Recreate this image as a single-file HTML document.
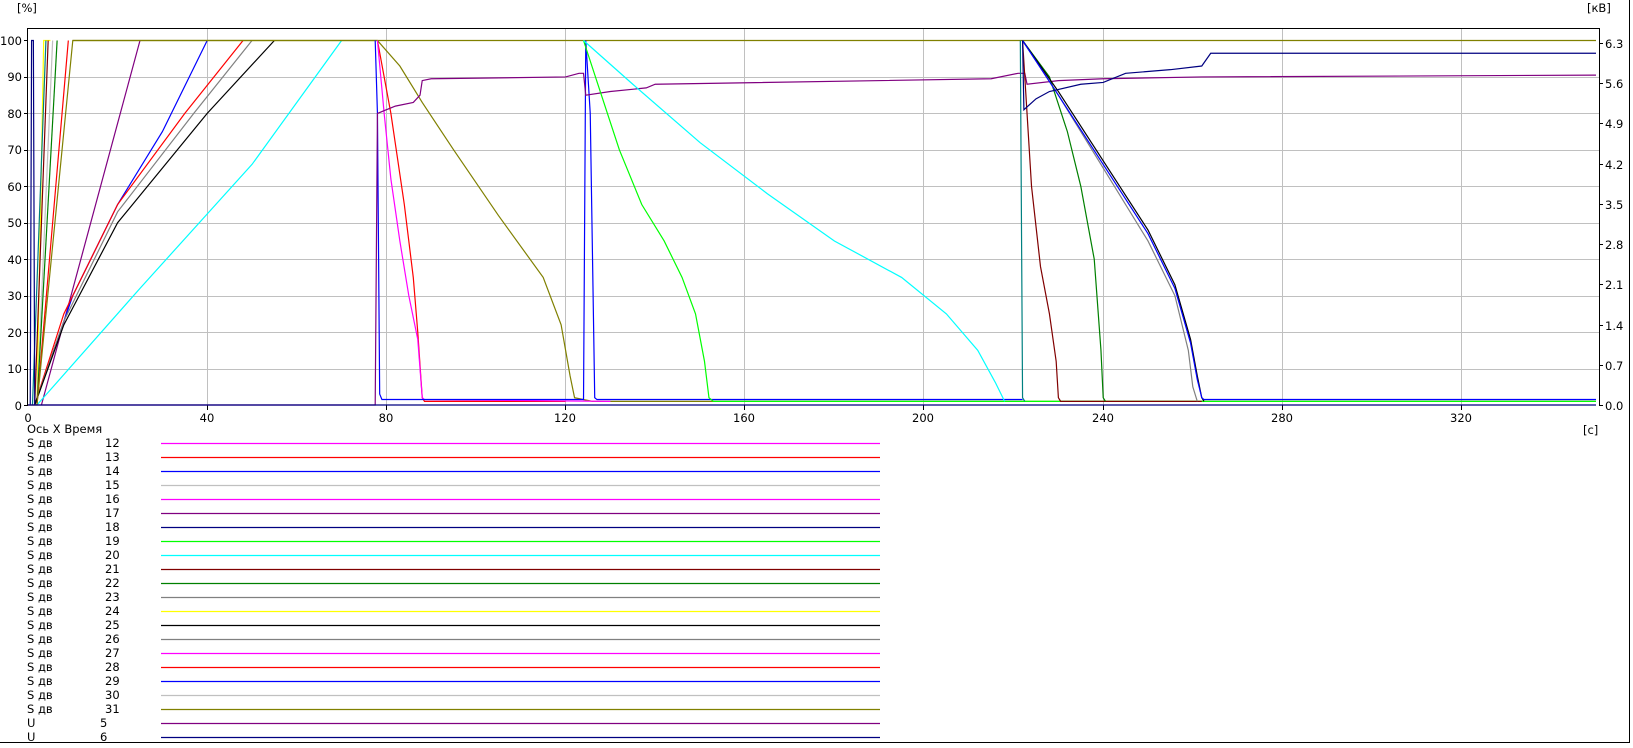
<!DOCTYPE html>
<html><head><meta charset="utf-8"><style>
body{margin:0;background:#fff;width:1633px;height:748px;overflow:hidden;font-family:Tahoma,"DejaVu Sans","Liberation Sans",sans-serif;font-size:12px;color:#000}
svg{position:absolute;left:0;top:0}
text{font-family:"DejaVu Sans","Liberation Sans",sans-serif;font-size:11.5px;fill:#000}
</style></head><body>
<svg width="1633" height="748" viewBox="0 0 1633 748">
<!-- frame -->
<line x1="1629.5" y1="0" x2="1629.5" y2="743" stroke="#000"/>
<line x1="0" y1="742.5" x2="1630" y2="742.5" stroke="#000"/>
<!-- grid -->
<g stroke="#c0c0c0" stroke-width="1">
<line x1="207.5" y1="28" x2="207.5" y2="405"/><line x1="386.5" y1="28" x2="386.5" y2="405"/><line x1="565.5" y1="28" x2="565.5" y2="405"/><line x1="744.5" y1="28" x2="744.5" y2="405"/><line x1="923.5" y1="28" x2="923.5" y2="405"/><line x1="1103.5" y1="28" x2="1103.5" y2="405"/><line x1="1282.5" y1="28" x2="1282.5" y2="405"/><line x1="1461.5" y1="28" x2="1461.5" y2="405"/>
<line x1="28" y1="77.5" x2="1599" y2="77.5"/><line x1="28" y1="113.5" x2="1599" y2="113.5"/><line x1="28" y1="150.5" x2="1599" y2="150.5"/><line x1="28" y1="186.5" x2="1599" y2="186.5"/><line x1="28" y1="223.5" x2="1599" y2="223.5"/><line x1="28" y1="259.5" x2="1599" y2="259.5"/><line x1="28" y1="296.5" x2="1599" y2="296.5"/><line x1="28" y1="332.5" x2="1599" y2="332.5"/><line x1="28" y1="369.5" x2="1599" y2="369.5"/>
</g>
<!-- axes -->
<g stroke="#000" fill="none">
<path d="M27.5,405.5 V28.5 H1599.5 V405.5"/>
<path d="M1599,43.5h4M1599,83.5h4M1599,123.5h4M1599,164.5h4M1599,204.5h4M1599,244.5h4M1599,284.5h4M1599,325.5h4M1599,365.5h4M1599,405.5h4"/>
<path d="M207.5,405v5M386.5,405v5M565.5,405v5M744.5,405v5M923.5,405v5M1103.5,405v5M1282.5,405v5M1461.5,405v5"/>
<path d="M24,40.5h4M24,77.5h4M24,113.5h4M24,150.5h4M24,186.5h4M24,223.5h4M24,259.5h4M24,296.5h4M24,332.5h4M24,369.5h4M24,405.5h4"/>
</g>
<text x="17" y="12">[%]</text>
<text x="1587" y="12">[кВ]</text>
<text x="1583" y="434">[c]</text>
<g text-anchor="end">
<text x="22" y="45">100</text><text x="22" y="81">90</text><text x="22" y="118">80</text><text x="22" y="154">70</text><text x="22" y="191">60</text><text x="22" y="227">50</text><text x="22" y="264">40</text><text x="22" y="300">30</text><text x="22" y="337">20</text><text x="22" y="373">10</text><text x="22" y="410">0</text>
</g>
<g>
<text x="1605" y="48">6.3</text><text x="1605" y="88">5.6</text><text x="1605" y="128">4.9</text><text x="1605" y="169">4.2</text><text x="1605" y="209">3.5</text><text x="1605" y="249">2.8</text><text x="1605" y="289">2.1</text><text x="1605" y="330">1.4</text><text x="1605" y="370">0.7</text><text x="1605" y="410">0.0</text>
</g>
<g text-anchor="middle">
<text x="28" y="422">0</text><text x="207" y="422">40</text><text x="386" y="422">80</text><text x="565" y="422">120</text><text x="744" y="422">160</text><text x="923" y="422">200</text><text x="1103" y="422">240</text><text x="1282" y="422">280</text><text x="1461" y="422">320</text>
</g>
<!-- curves: data space t(s), p(%) -->
<g transform="translate(28,405) scale(4.48,-3.645)" fill="none" stroke-width="1.2" style="vector-effect:non-scaling-stroke">
<g style="vector-effect:non-scaling-stroke">
<polyline vector-effect="non-scaling-stroke" stroke="#ffff00" points="0,0 2,0 3.5,100 5,100"/>
<polyline vector-effect="non-scaling-stroke" stroke="#008080" points="1,0 4,100"/>
<polyline vector-effect="non-scaling-stroke" stroke="#800000" points="1.5,0 4.5,100"/>
<polyline vector-effect="non-scaling-stroke" stroke="#c0c0c0" points="2,0 5.5,100"/>
<polyline vector-effect="non-scaling-stroke" stroke="#008000" points="2,0 6.5,100"/>
<polyline vector-effect="non-scaling-stroke" stroke="#ff0000" points="2,0 9,100"/>
<polyline vector-effect="non-scaling-stroke" stroke="#800080" points="3,0 25,100"/>
<polyline vector-effect="non-scaling-stroke" stroke="#0000ff" points="1.5,0 10,30 20,55 30,75 40,100"/>
<polyline vector-effect="non-scaling-stroke" stroke="#ff0000" points="1.5,0 8,25 20,55 35,80 48,100"/>
<polyline vector-effect="non-scaling-stroke" stroke="#808080" points="1.5,0 8,23 20,53 37,80 50,100"/>
<polyline vector-effect="non-scaling-stroke" stroke="#000000" points="1.5,0 8,22 20,50 40,80 55,100"/>
<polyline vector-effect="non-scaling-stroke" stroke="#00ffff" points="2,0 25,32 50,66 70,100"/>
<polyline vector-effect="non-scaling-stroke" stroke="#000080" points="0.5,0 0.8,100 1.2,100 1.5,0"/>
<polyline vector-effect="non-scaling-stroke" stroke="#808000" points="2,0 10,100 78,100 83,93 88,83 95,70 105,52 115,35 119,22 121,8 122,2 126,1 350,1"/>
<polyline vector-effect="non-scaling-stroke" stroke="#808000" points="10,100 350,100"/>
<polyline vector-effect="non-scaling-stroke" stroke="#ff0000" points="78,100 81,80 84,55 86,35 87,20 88,2 88.5,1 120,1"/>
<polyline vector-effect="non-scaling-stroke" stroke="#ff00ff" points="78,100 79.5,80 81,62 83,45 85,30 87,18 88,2 88.5,1.5 130,1"/>
<polyline vector-effect="non-scaling-stroke" stroke="#0000ff" points="77.5,100 78,80 78.5,3 79,1.5 124,1.5 124.5,100 125.5,80 126.5,2 127,1.5 222,1.5"/>
<polyline vector-effect="non-scaling-stroke" stroke="#800080" points="0,0 77.5,0 78,80 82,82 86,83 87.5,85 88,89 90,89.5 120,90 123,91 124,91 124.5,85 130,86 138,87 140,88 215,89.5 221,91 222.5,91 223,88 230,89 240,89.5 262,90 350,90.5"/>
<polyline vector-effect="non-scaling-stroke" stroke="#00ff00" points="124,100 128,85 132,70 137,55 142,45 146,35 149,25 151,12 152,2 153,1 350,1"/>
<polyline vector-effect="non-scaling-stroke" stroke="#00ffff" points="124,100 135,88 150,72 165,58 180,45 195,35 205,25 212,15 216,6 218,1"/>
<polyline vector-effect="non-scaling-stroke" stroke="#008080" points="221.5,100 222,2 222.5,1"/>
<polyline vector-effect="non-scaling-stroke" stroke="#800000" points="222,100 223,80 224,60 226,38 228,25 229.5,12 230,2 230.5,1 262,1"/>
<polyline vector-effect="non-scaling-stroke" stroke="#008000" points="222,100 228,90 232,75 235,60 238,40 239.5,15 240,2 240.5,1"/>
<polyline vector-effect="non-scaling-stroke" stroke="#808080" points="222,100 230,85 240,65 250,45 256,30 259,15 260,5 261,1"/>
<polyline vector-effect="non-scaling-stroke" stroke="#000000" points="222,100 230,86 240,67 250,48 256,33 259.5,18 261,8 262,2 262.5,1"/>
<polyline vector-effect="non-scaling-stroke" stroke="#0000ff" points="222,100 230,85 240,66 250,47 256,32 259.5,17 261,7 262,2 262.5,1.5 350,1.5"/>
<polyline vector-effect="non-scaling-stroke" stroke="#000080" points="222,100 222.3,81 225,84 228,86 235,88 240,88.5 245,91 255,92 262,93 264,96.5 350,96.5"/>
<polyline vector-effect="non-scaling-stroke" stroke="#000080" points="0,0 350,0"/>
</g></g>
<!-- legend -->
<text x="27" y="433">Ось X  Время</text>
<g id="lg"></g>
<g stroke-width="1.3">
<line x1="161" x2="880" y1="443.5" y2="443.5" stroke="#ff00ff"/>
<line x1="161" x2="880" y1="457.5" y2="457.5" stroke="#ff0000"/>
<line x1="161" x2="880" y1="471.5" y2="471.5" stroke="#0000ff"/>
<line x1="161" x2="880" y1="485.5" y2="485.5" stroke="#c0c0c0"/>
<line x1="161" x2="880" y1="499.5" y2="499.5" stroke="#ff00ff"/>
<line x1="161" x2="880" y1="513.5" y2="513.5" stroke="#800080"/>
<line x1="161" x2="880" y1="527.5" y2="527.5" stroke="#000080"/>
<line x1="161" x2="880" y1="541.5" y2="541.5" stroke="#00ff00"/>
<line x1="161" x2="880" y1="555.5" y2="555.5" stroke="#00ffff"/>
<line x1="161" x2="880" y1="569.5" y2="569.5" stroke="#800000"/>
<line x1="161" x2="880" y1="583.5" y2="583.5" stroke="#008000"/>
<line x1="161" x2="880" y1="597.5" y2="597.5" stroke="#808080"/>
<line x1="161" x2="880" y1="611.5" y2="611.5" stroke="#ffff00"/>
<line x1="161" x2="880" y1="625.5" y2="625.5" stroke="#000000"/>
<line x1="161" x2="880" y1="639.5" y2="639.5" stroke="#808080"/>
<line x1="161" x2="880" y1="653.5" y2="653.5" stroke="#ff00ff"/>
<line x1="161" x2="880" y1="667.5" y2="667.5" stroke="#ff0000"/>
<line x1="161" x2="880" y1="681.5" y2="681.5" stroke="#0000ff"/>
<line x1="161" x2="880" y1="695.5" y2="695.5" stroke="#c0c0c0"/>
<line x1="161" x2="880" y1="709.5" y2="709.5" stroke="#808000"/>
<line x1="161" x2="880" y1="723.5" y2="723.5" stroke="#800080"/>
<line x1="161" x2="880" y1="737.5" y2="737.5" stroke="#000080"/>
</g>
<g>
<text x="27" y="447">S дв</text><text x="105" y="447">12</text>
<text x="27" y="461">S дв</text><text x="105" y="461">13</text>
<text x="27" y="475">S дв</text><text x="105" y="475">14</text>
<text x="27" y="489">S дв</text><text x="105" y="489">15</text>
<text x="27" y="503">S дв</text><text x="105" y="503">16</text>
<text x="27" y="517">S дв</text><text x="105" y="517">17</text>
<text x="27" y="531">S дв</text><text x="105" y="531">18</text>
<text x="27" y="545">S дв</text><text x="105" y="545">19</text>
<text x="27" y="559">S дв</text><text x="105" y="559">20</text>
<text x="27" y="573">S дв</text><text x="105" y="573">21</text>
<text x="27" y="587">S дв</text><text x="105" y="587">22</text>
<text x="27" y="601">S дв</text><text x="105" y="601">23</text>
<text x="27" y="615">S дв</text><text x="105" y="615">24</text>
<text x="27" y="629">S дв</text><text x="105" y="629">25</text>
<text x="27" y="643">S дв</text><text x="105" y="643">26</text>
<text x="27" y="657">S дв</text><text x="105" y="657">27</text>
<text x="27" y="671">S дв</text><text x="105" y="671">28</text>
<text x="27" y="685">S дв</text><text x="105" y="685">29</text>
<text x="27" y="699">S дв</text><text x="105" y="699">30</text>
<text x="27" y="713">S дв</text><text x="105" y="713">31</text>
<text x="27" y="727">U</text><text x="100" y="727">5</text>
<text x="27" y="741">U</text><text x="100" y="741">6</text>
</g>
</svg>
</body></html>
